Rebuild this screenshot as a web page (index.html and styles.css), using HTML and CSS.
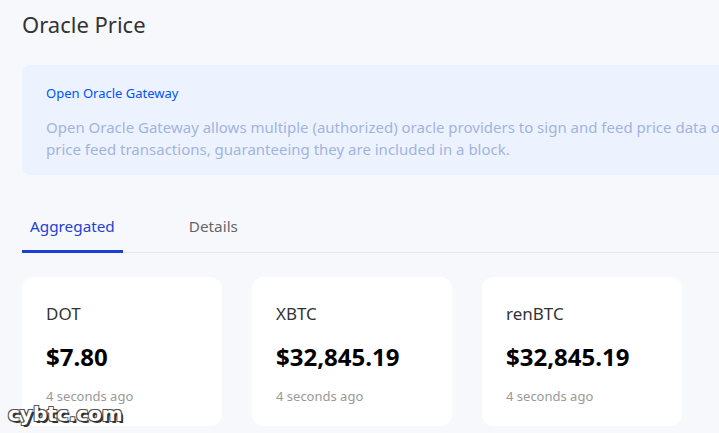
FILE: index.html
```html
<!DOCTYPE html>
<html lang="en">
<head>
<meta charset="utf-8">
<title>Oracle Price</title>
<link rel="stylesheet" href="styles.css">
</head>
<body>
<main class="page">
  <h1 class="title">Oracle Price</h1>
  <section class="notice">
    <div class="notice-title">Open Oracle Gateway</div>
    <p class="notice-text">Open Oracle Gateway allows multiple (authorized) oracle providers to sign and feed price data on-chain, with free<br>price feed transactions, guaranteeing they are included in a block.</p>
  </section>
  <nav class="tabs">
    <div class="tab active">Aggregated</div>
    <div class="tab">Details</div>
  </nav>
  <div class="cards">
    <div class="card">
      <div class="sym">DOT</div>
      <div class="price">$7.80</div>
      <div class="time">4 seconds ago</div>
    </div>
    <div class="card">
      <div class="sym">XBTC</div>
      <div class="price">$32,845.19</div>
      <div class="time">4 seconds ago</div>
    </div>
    <div class="card">
      <div class="sym">renBTC</div>
      <div class="price">$32,845.19</div>
      <div class="time">4 seconds ago</div>
    </div>
  </div>
</main>
<div class="watermark">cybtc.com</div>
</body>
</html>
```

FILE: styles.css
```css
html, body {
  margin: 0;
  padding: 0;
}
body {
  background: #f7f8fc;
  font-family: "Noto Sans", "Open Sans", sans-serif;
  color: #333;
  width: 719px;
  height: 433px;
  overflow: hidden;
  position: relative;
}
.page {
  padding: 6px 0 0 22px;
  width: 697px;
}
.title {
  margin: 0;
  font-size: 22px;
  font-weight: 400;
  line-height: 36px;
  color: #333;
}
.notice {
  margin-top: 23px;
  background: #ecf3fe;
  border-radius: 8px 0 0 8px;
  padding: 18px 0 14px 24px;
  height: 78px;
  overflow: hidden;
}
.notice-title {
  font-size: 13px;
  color: #0052ff;
  line-height: 20px;
}
.notice-text {
  margin: 13px 0 0 0;
  font-size: 15px;
  line-height: 22px;
  color: #a3b3df;
  white-space: nowrap;
}
.tabs {
  margin-top: 33px;
  display: flex;
  gap: 58px;
  border-bottom: 1px solid #e8e9ef;
}
.tab {
  font-size: 15.3px;
  line-height: 22px;
  padding: 7px 8px 13px 8px;
  color: #666;
}
.tab.active {
  color: #2142d6;
  border-bottom: 3px solid #1b3fd6;
  margin-bottom: -1px;
}
.cards {
  margin-top: 24px;
  display: flex;
  gap: 30px;
}
.card {
  width: 200px;
  height: 149px;
  box-sizing: border-box;
  background: #fff;
  border-radius: 12px;
  padding: 25px 24px 0 24px;
}
.sym {
  font-size: 17px;
  line-height: 24px;
  color: #333;
}
.price {
  margin-top: 15px;
  font-size: 24px;
  line-height: 32px;
  font-weight: 700;
  color: #000;
}
.time {
  margin-top: 13px;
  font-size: 13px;
  line-height: 20px;
  color: #999;
}
.watermark {
  position: absolute;
  left: 8px;
  top: 402px;
  font-family: "DejaVu Sans", sans-serif;
  font-weight: 700;
  font-size: 20px;
  color: #fff;
  text-shadow: 2px 2px 0 #333, -1px -1px 0 #555, 1px -1px 0 #555, -1px 1px 0 #555;
}
```
